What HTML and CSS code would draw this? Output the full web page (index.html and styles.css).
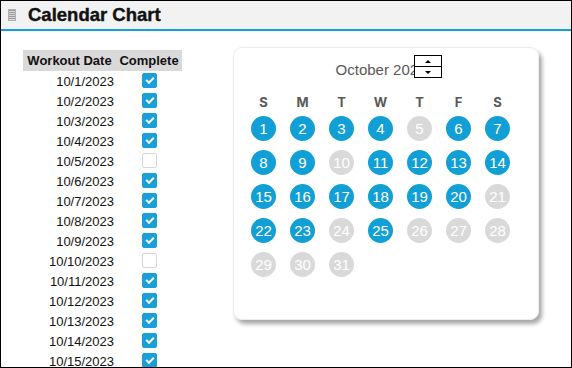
FILE: index.html
```html
<html lang="en">
<head>
    <meta charset="UTF-8">
    <title>Calendar Chart</title>
    <link rel="stylesheet" href="styles.css">
</head>
<body>
    <div class="sheet">
        <div class="header">
            <span class="grip"></span>
            <h1>Calendar Chart</h1>
        </div>
        <div class="content">
            <table class="log">
                <thead>
                    <tr><th class="col-date">Workout Date</th><th class="col-box">Complete</th></tr>
                </thead>
                <tbody id="rows"></tbody>
            </table>
            <div class="card">
                <div class="month">
                    <span>October 2023</span>
                    <div class="spinner">
                        <div class="spin up"></div>
                        <div class="spin down"></div>
                    </div>
                </div>
                <div class="days">
                    <div class="dow">S</div><div class="dow">M</div><div class="dow">T</div><div class="dow">W</div><div class="dow">T</div><div class="dow">F</div><div class="dow">S</div>
                </div>
                <div class="days" id="grid"></div>
            </div>
        </div>
    </div>
    <script>
        const done = [1,2,3,4,6,7,8,9,11,12,13,14,15,16,17,18,19,20,22,23,25];
        const rows = document.getElementById('rows');
        for (let d = 1; d <= 15; d++) {
            const tr = document.createElement('tr');
            const checked = done.includes(d) ? ' checked' : '';
            tr.innerHTML = '<td class="date">10/' + d + '/2023</td><td class="box"><span class="check' + checked + '"></span></td>';
            rows.appendChild(tr);
        }
        const grid = document.getElementById('grid');
        for (let d = 1; d <= 31; d++) {
            const cell = document.createElement('div');
            cell.className = 'day';
            const dot = document.createElement('span');
            dot.className = done.includes(d) ? 'dot on' : 'dot';
            dot.textContent = d;
            cell.appendChild(dot);
            grid.appendChild(cell);
        }
    </script>
</body>
</html>
```

FILE: styles.css
```css
body {
    margin: 0;
    font-family: "Liberation Sans", Arial, sans-serif;
}

.sheet {
    width: 572px;
    height: 368px;
    box-sizing: border-box;
    border: 1px solid #000;
    overflow: hidden;
    background: #fff;
}

.header {
    display: flex;
    align-items: center;
    height: 28px;
    background: #f2f2f2;
    border-bottom: 2px solid #139fd7;
    padding-left: 7px;
}

.grip {
    width: 6px;
    height: 10px;
    margin-right: 12px;
    background: repeating-linear-gradient(#9a9a9a 0 1px, #d8d8d8 1px 2px);
    border: 1px solid #b0b0b0;
}

h1 {
    margin: 0;
    font-family: "Liberation Sans", Arial, sans-serif;
    font-size: 18.5px;
    font-weight: 700;
    color: #111;
    -webkit-text-stroke: 0.4px #111;
}

.content {
    display: flex;
    align-items: flex-start;
    padding: 17px 0 0 22px;
}

.log {
    border-collapse: collapse;
    margin-top: 2px;
}

.log th {
    background: #d9d9d9;
    font-weight: 700;
    font-size: 13px;
    height: 21px;
    padding: 0;
    color: #111;
}

.col-date {
    width: 93px;
}

.col-box {
    width: 66px;
}

.log td {
    height: 20px;
    padding: 0;
    font-size: 13px;
    color: #111;
}

.date {
    text-align: right;
    padding-right: 2px !important;
}

.box {
    text-align: center;
}

.check {
    display: inline-block;
    width: 13px;
    height: 13px;
    border: 1px solid #d6d6d6;
    border-radius: 2px;
    vertical-align: middle;
    position: relative;
    top: -1px;
}

.check.checked {
    background: #1a9fd8;
    border-color: #1a9fd8;
}

.check.checked::after {
    content: "";
    position: absolute;
    left: 3px;
    top: 3px;
    width: 6px;
    height: 3px;
    border-left: 2px solid #fff;
    border-bottom: 2px solid #fff;
    transform: rotate(-45deg);
}

.card {
    width: 306px;
    height: 273px;
    box-sizing: border-box;
    margin-left: 51px;
    margin-top: -1px;
    border: 1px solid #ececec;
    border-radius: 9px;
    box-shadow: 3px 4px 4px rgba(0, 0, 0, 0.35);
    padding: 10px 0 0 10px;
}

.month {
    position: relative;
    text-align: center;
    width: 274px;
    padding-right: 12px;
    height: 24px;
    line-height: 24px;
    font-size: 15px;
    color: #595959;
    margin-bottom: 12px;
}

.spinner {
    position: absolute;
    left: 170px;
    top: -3px;
    width: 26px;
    height: 21px;
    border: 1px solid #000;
    background: #fff;
    display: flex;
    flex-direction: column;
}

.spin {
    flex: 1;
    position: relative;
}

.spin.up {
    border-bottom: 1px solid #000;
}

.spin::after {
    content: "";
    position: absolute;
    left: 10px;
    top: 4px;
    border-left: 3px solid transparent;
    border-right: 3px solid transparent;
}

.spin.up::after {
    border-bottom: 3px solid #000;
}

.spin.down::after {
    border-top: 3px solid #000;
}

.days {
    display: grid;
    grid-template-columns: repeat(7, 39px);
    row-gap: 9px;
}

.dow {
    text-align: center;
    font-family: Inter, "Open Sans", sans-serif;
    font-weight: 700;
    font-size: 13px;
    color: #595959;
    height: 16px;
    margin-bottom: 6px;
}

.day {
    display: flex;
    justify-content: center;
}

.dot {
    width: 25px;
    height: 25px;
    border-radius: 50%;
    background: #d9d9d9;
    color: #fff;
    font-size: 15px;
    display: flex;
    align-items: center;
    justify-content: center;
}

.dot.on {
    background: #129fd6;
}
```
